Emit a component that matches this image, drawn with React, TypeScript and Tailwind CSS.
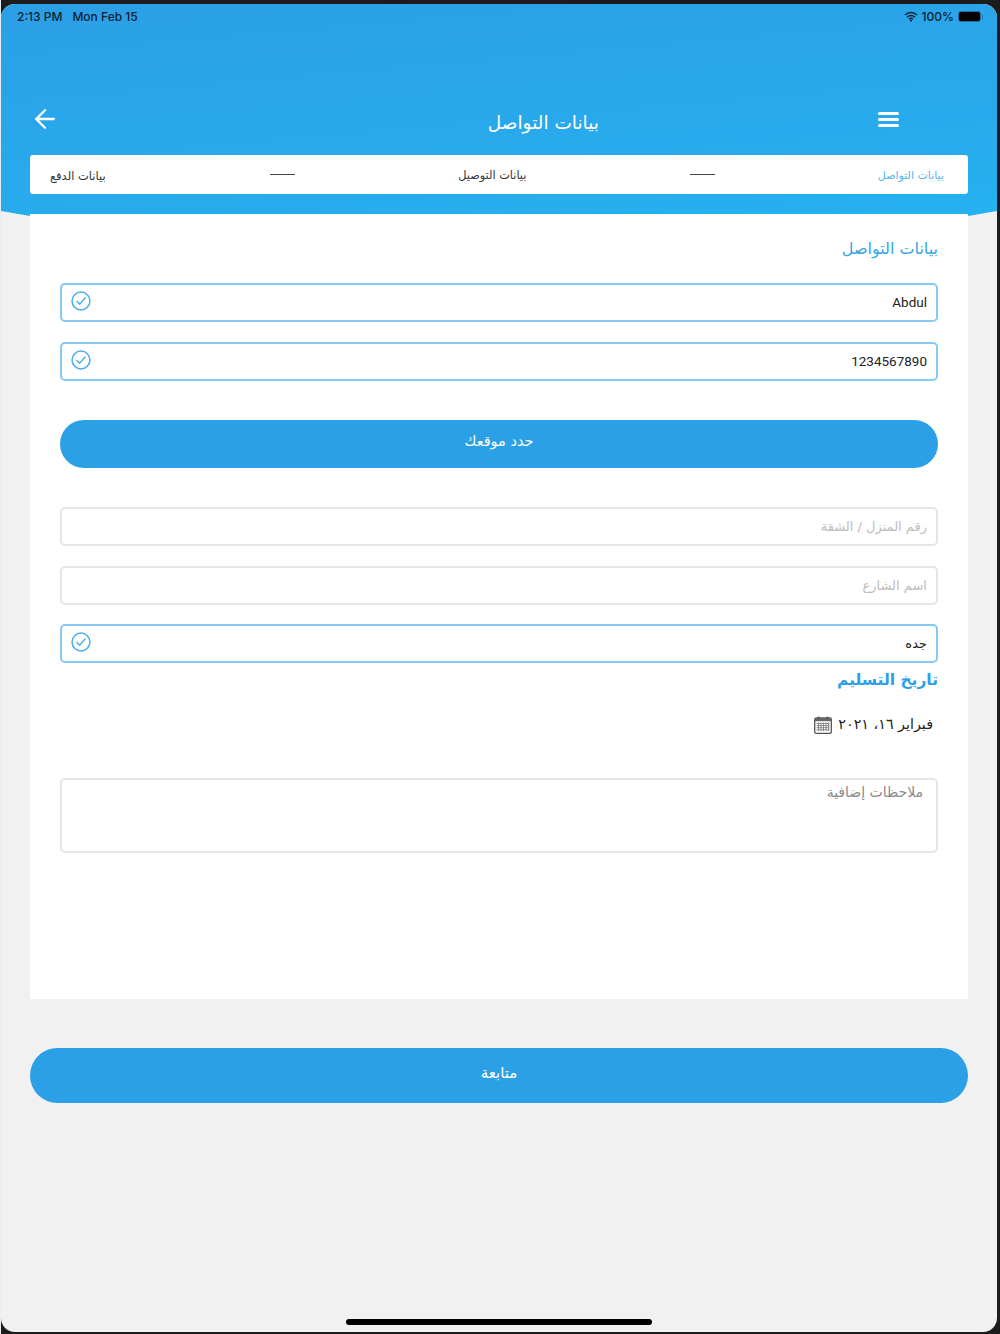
import React from 'react';
import { ArrowLeft } from 'lucide-react';

const font = { arabic: "font-['DejaVu_Sans',sans-serif]" };

function CheckCircle() {
  return (
    <svg width="20" height="20" viewBox="0 0 21 21" fill="none" className="shrink-0">
      <circle cx="10.5" cy="10.5" r="9.4" stroke="#4aaeea" strokeWidth="1.6" />
      <path d="M6.2 11l3 2.8 5.6-6.4" stroke="#4aaeea" strokeWidth="1.5" strokeLinecap="round" strokeLinejoin="round" />
    </svg>
  );
}

function Field({ value, filled, latin }: { value: string; filled?: boolean; latin?: boolean }) {
  return (
    <div
      className={`h-[39px] rounded-[5px] border-2 flex items-center justify-between pl-[9px] pr-[9px] ${
        filled ? 'border-[#86caf4]' : 'border-[#e6e6e6]'
      }`}
    >
      <div className="-mt-[3px]">{filled && <CheckCircle />}</div>
      <span
        dir={latin ? 'ltr' : 'rtl'}
        className={`${latin ? "font-['Roboto',sans-serif] text-[13.5px]" : 'text-[13px]'} ${
          filled ? 'text-[#222222]' : 'text-[#bdbdbd] pt-[1px]'
        }`}
      >
        {value}
      </span>
    </div>
  );
}

function CalendarIcon() {
  return (
    <svg width="18" height="18" viewBox="0 0 18 18" fill="none" className="shrink-0">
      <rect x="0.7" y="2" width="16.6" height="15.3" rx="1.4" stroke="#555555" strokeWidth="1.3" />
      <rect x="1" y="2.2" width="16" height="3" fill="#666666" />
      <rect x="4" y="0.6" width="1.4" height="3" fill="#555555" />
      <rect x="12.6" y="0.6" width="1.4" height="3" fill="#555555" />
      <path
        d="M2.5 7.5h13M2.5 9.6h13M2.5 11.7h13M2.5 13.8h13M4.5 6.5v8.6M7 6.5v8.6M9.5 6.5v8.6M12 6.5v8.6M14.5 6.5v8.6"
        stroke="#8a8a8a"
        strokeWidth="1"
      />
    </svg>
  );
}

export default function App() {
  return (
    <div className={`h-[1334px] w-[1000px] overflow-hidden bg-[#1c1c1c] border-l border-[#e6eef5] pt-[4px] pb-[2px] pr-[3px] ${font.arabic}`}>
      <div className="relative h-full rounded-[14px] overflow-hidden bg-[#f1f1f1] flex flex-col">
        {/* header */}
        <div className="h-[212px] shrink-0 bg-[linear-gradient(175deg,#2c9fe6,#25b1f1)] [clip-path:polygon(0_0,100%_0,100%_207px,967px_212px,29px_212px,0_207px)]">
          <div className="h-[24px] pt-[1px] flex items-center justify-between pl-[16px] pr-[14px] text-[12px] text-[#0d2233] font-['Inter',sans-serif] font-medium">
            <span>
              2:13 PM<span className="ml-[10px]">Mon Feb 15</span>
            </span>
            <span className="flex items-center">
              <svg width="14" height="11" viewBox="0 0 14 11" fill="none">
                <path d="M1 4a8.6 8.6 0 0 1 12 0M3 6.2a5.8 5.8 0 0 1 8 0M5 8.2a2.9 2.9 0 0 1 4 0" stroke="#0d2233" strokeWidth="1.5" />
                <circle cx="7" cy="9.6" r="1.1" fill="#0d2233" />
              </svg>
              <span className="ml-[4px]">100%</span>
              <span className="ml-[4px] w-[23px] h-[11px] rounded-[3px] border border-[#1f6ea6] bg-black" />
              <span className="ml-px w-px h-[4px] bg-[#1f6ea6]" />
            </span>
          </div>

          <div className="mt-[73px] h-[40px] flex items-center text-white pl-[29px]">
            <ArrowLeft size={30} strokeWidth={1.9} className="shrink-0 -mt-[4px]" />
            <span className="ml-[428px] pt-[4px] w-[111px] text-center text-[18.5px] whitespace-nowrap" dir="rtl">
              بيانات التواصل
            </span>
            <div className="ml-[279px] -mt-[4px] flex flex-col gap-[3px] w-[21px]">
              <span className="h-[3px] rounded-full bg-white" />
              <span className="h-[3px] rounded-full bg-white" />
              <span className="h-[3px] rounded-full bg-white" />
            </div>
          </div>

          <div className="mx-[29px] mt-[14px] h-[39px] pt-[4px] rounded-[3px] bg-white flex items-center justify-between pl-[20px] pr-[24px] text-[11.5px] text-[#333333]">
            <span dir="rtl">بيانات الدفع</span>
            <span className="w-[25px] h-px bg-[#444444] -mt-[4px] ml-[1px]" />
            <span dir="rtl" className="text-[11.3px]">بيانات التوصيل</span>
            <span className="w-[25px] h-px bg-[#444444] -mt-[4px]" />
            <span dir="rtl" className="text-[#55b5ee] text-[11px]">
              بيانات التواصل
            </span>
          </div>
        </div>

        {/* form card */}
        <div className="mx-[29px] -mt-[2px] h-[785px] shrink-0 bg-white px-[30px] pt-[21px] relative">
          <h2 dir="rtl" className="text-[16px] leading-[28px] text-[#35a5e8] mb-[20px]">
            بيانات التواصل
          </h2>
          <div className="flex flex-col gap-[20px]">
            <Field value="Abdul" filled latin />
            <Field value="1234567890" filled latin />
          </div>
          <button className="mt-[39px] w-full h-[48px] pb-[4px] rounded-full bg-[#2ca0e6] text-white text-[14.5px]">حدد موقعك</button>
          <div className="mt-[39px] flex flex-col gap-[19.5px]">
            <Field value="رقم المنزل / الشقة" />
            <Field value="اسم الشارع" />
            <Field value="جده" filled />
          </div>
          <h3 dir="rtl" className="mt-[4px] text-[15.5px] leading-[26px] font-bold text-[#2ca0e6]">
            تاريخ التسليم
          </h3>
          <div className="mt-[19px] flex items-center justify-end gap-[6px] pr-[5px] h-[26px] text-[14.3px] text-[#222222]">
            <CalendarIcon />
            <span dir="rtl">فبراير ١٦، ٢٠٢١</span>
          </div>
          <div dir="rtl" className="mt-[40px] h-[75px] rounded-[5px] border-2 border-[#e6e6e6] px-[13px] pt-[2px] text-[14px] text-[#8a8a8a]">
            ملاحظات إضافية
          </div>
        </div>

        <button className="mx-[29px] mt-[49px] h-[55px] pb-[4px] shrink-0 rounded-full bg-[#2ca0e6] text-white text-[15px]">متابعة</button>

        {/* home indicator */}
        <div className="mt-auto mb-[7px] mx-auto w-[306px] h-[6px] rounded-full bg-black" />
      </div>
    </div>
  );
}
